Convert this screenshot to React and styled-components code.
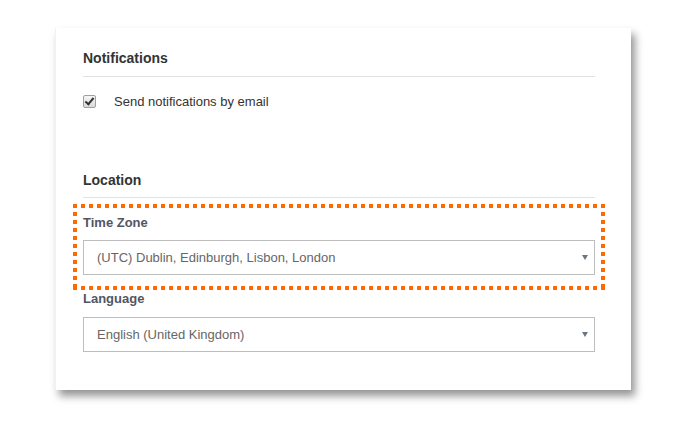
import React from 'react'
import styled, { createGlobalStyle } from 'styled-components'

const GlobalStyle = createGlobalStyle`
  html, body {
    margin: 0;
    padding: 0;
    background: #ffffff;
  }
  body {
    font-family: "Liberation Sans", Arial, sans-serif;
    width: 689px;
    height: 424px;
    overflow: hidden;
  }
`

const Page = styled.div`
  padding: 28px 0 0 56px;
`

const Card = styled.div`
  width: 512px;
  padding: 20px 36px 38px 27px;
  background: #fff;
  border-left: 1px solid rgba(0, 0, 0, 0.05);
  box-shadow: 4px 6px 8px rgba(0, 0, 0, 0.42);
  margin-left: -1px;
`

const SectionTitle = styled.h3`
  margin: 0;
  font-size: 14px;
  line-height: 20px;
  font-weight: bold;
  color: #333333;
  padding-bottom: ${p => p.$gap}px;
  border-bottom: 1px solid #e2e2e2;
`

const CheckRow = styled.label`
  display: flex;
  align-items: center;
  gap: 18px;
  margin-top: 14px;
  height: 20px;
  font-size: 13px;
  color: #333333;
`

const Check = styled.input`
  appearance: none;
  margin: 0;
  width: 13px;
  height: 13px;
  box-sizing: border-box;
  border: 1px solid #9f9f9f;
  border-radius: 2px;
  background: linear-gradient(#f6f6f6, #d9d9d9);
  position: relative;
  &:checked::after {
    content: '';
    position: absolute;
    left: 3px;
    top: 0px;
    width: 3px;
    height: 7px;
    border: solid #333;
    border-width: 0 2px 2px 0;
    transform: rotate(40deg);
  }
`

const Spacer = styled.div`
  height: 59px;
`

const Highlight = styled.div`
  margin: 6px -10px 0 -10px;
  padding: 10px 10px 15px 10px;
  background:
    repeating-linear-gradient(90deg, #ff6a00 0 4px, transparent 4px 8px) top left / 100% 4px no-repeat,
    repeating-linear-gradient(90deg, #ff6a00 0 4px, transparent 4px 8px) bottom left / 100% 4px no-repeat,
    repeating-linear-gradient(180deg, #ff6a00 0 4px, transparent 4px 8px) top left / 4px 100% no-repeat,
    repeating-linear-gradient(180deg, #ff6a00 0 4px, transparent 4px 8px) top right / 4px 100% no-repeat;
`

const Field = styled.div`
  display: flex;
  flex-direction: column;
`

const Label = styled.div`
  font-size: 13px;
  line-height: 18px;
  font-weight: bold;
  color: #55555f;
  margin-bottom: ${p => p.$gap}px;
`

const SelectWrap = styled.div`
  position: relative;
  &::after {
    content: '';
    position: absolute;
    right: 7px;
    top: 15px;
    border-left: 3px solid transparent;
    border-right: 3px solid transparent;
    border-top: 5px solid #6b7680;
    pointer-events: none;
  }
`

const Select = styled.select`
  appearance: none;
  width: 100%;
  height: 35px;
  box-sizing: border-box;
  border: 1px solid #bdbdbd;
  border-radius: 0;
  background: #fff;
  padding: 0 20px 0 13px;
  font-family: "Liberation Sans", Arial, sans-serif;
  font-size: 13px;
  color: #666666;
  outline: none;
`

const Dropdown = ({ value }) => (
  <SelectWrap>
    <Select defaultValue={value}>
      <option>{value}</option>
    </Select>
  </SelectWrap>
)

export default function App() {
  return (
    <>
      <GlobalStyle />
      <Page>
        <Card>
          <SectionTitle $gap={8}>Notifications</SectionTitle>
          <CheckRow>
            <Check type="checkbox" defaultChecked />
            Send notifications by email
          </CheckRow>
          <Spacer />
          <SectionTitle $gap={7}>Location</SectionTitle>
          <Highlight>
            <Field>
              <Label $gap={8}>Time Zone</Label>
              <Dropdown value="(UTC) Dublin, Edinburgh, Lisbon, London" />
            </Field>
          </Highlight>
          <Field>
            <Label $gap={9}>Language</Label>
            <Dropdown value="English (United Kingdom)" />
          </Field>
        </Card>
      </Page>
    </>
  )
}
